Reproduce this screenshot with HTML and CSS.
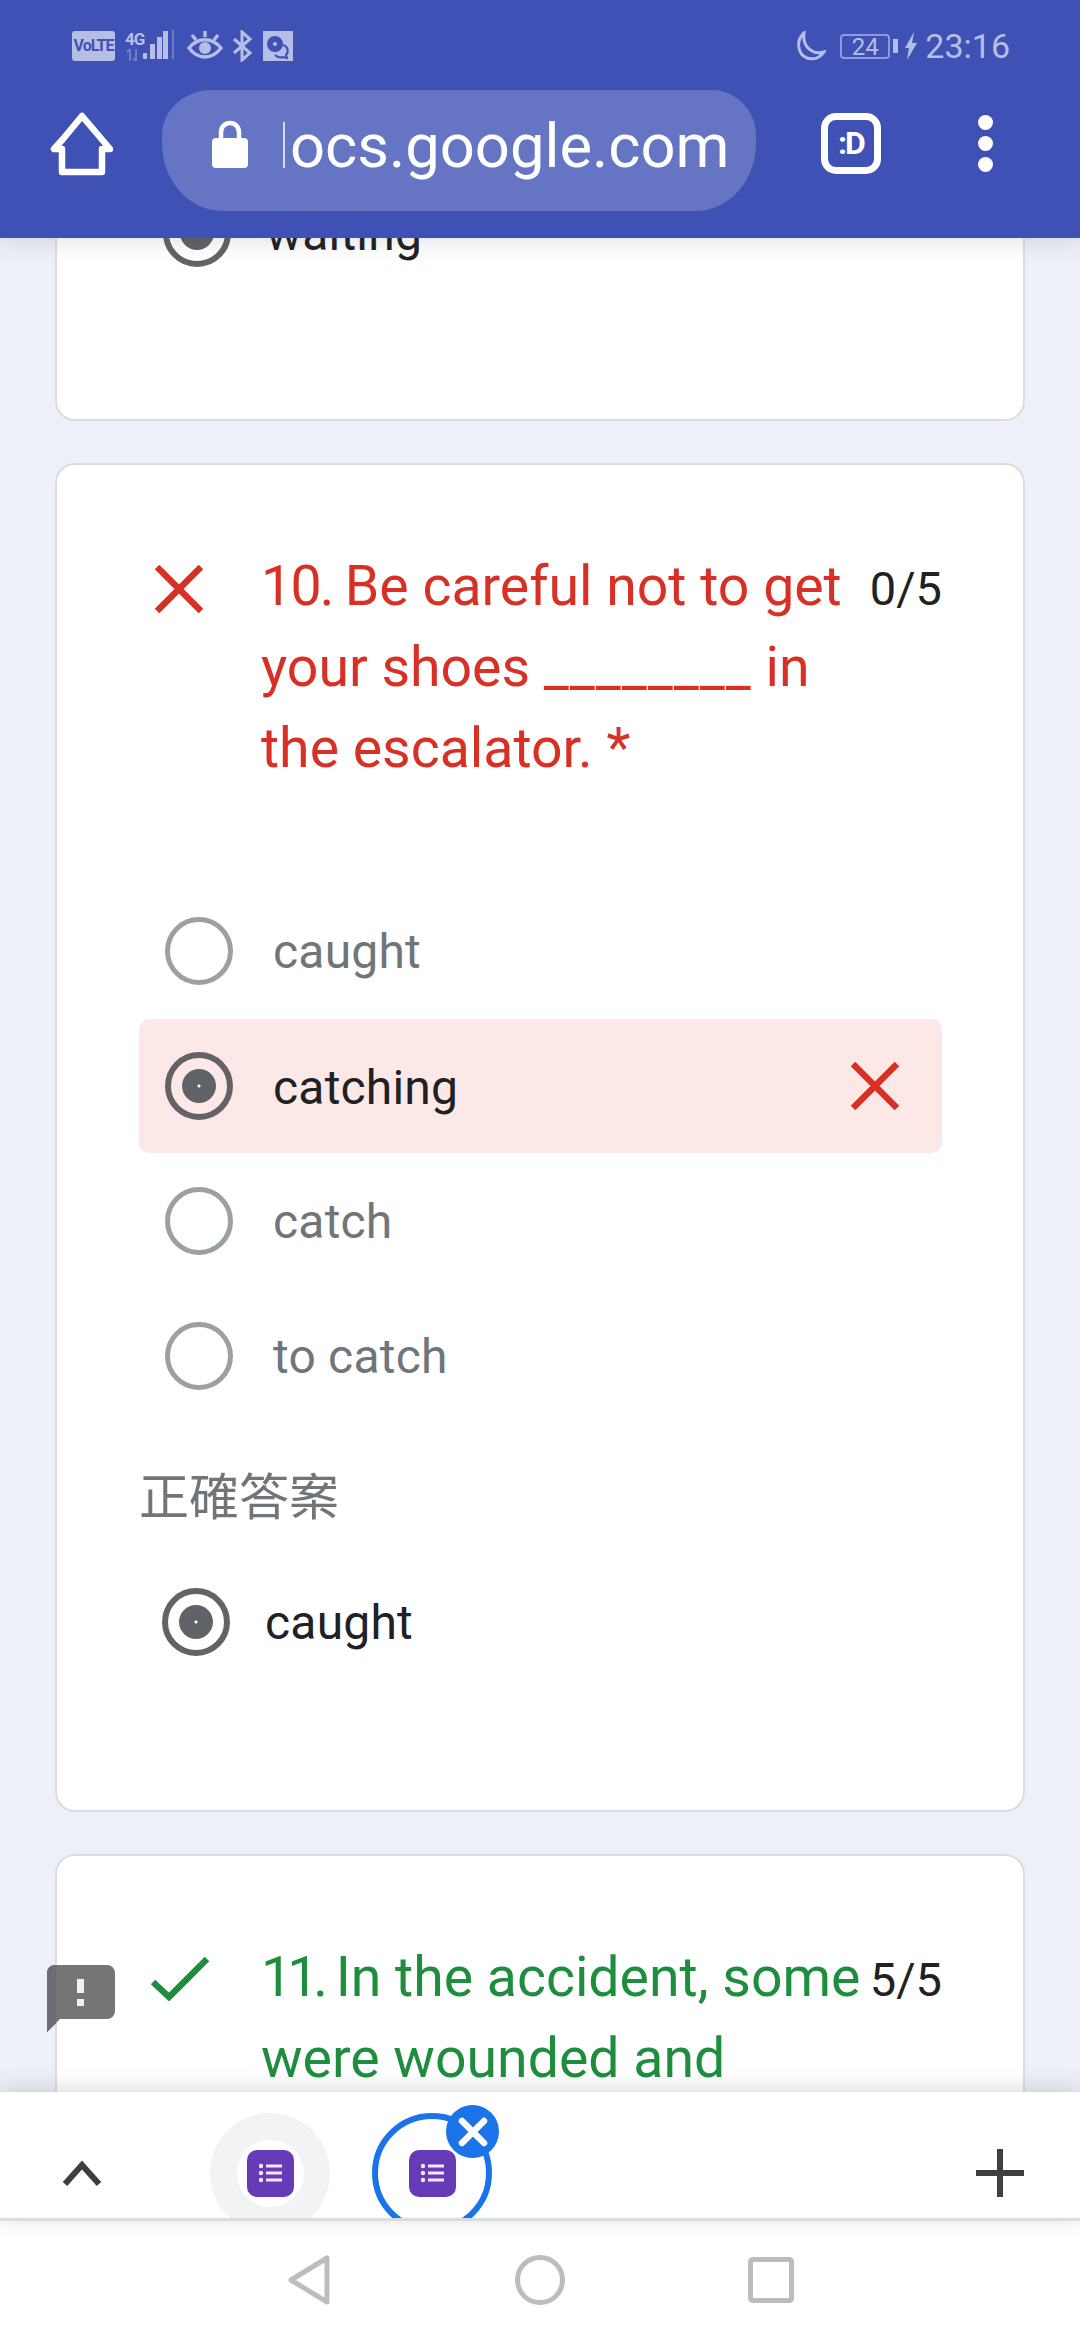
FILE: index.html
```html
<!DOCTYPE html>
<html lang="zh-Hant">
<head>
  <meta charset="utf-8">
  <title>docs.google.com</title>
  <link rel="stylesheet" href="styles.css">
</head>
<body>
  <div class="phone">
    <header class="top">
      <div class="status">
        <div class="status-left">
          <span class="volte">VoLTE</span>
          <span class="net">
            <span class="net-4g">4G</span>
            <svg class="net-arrows" width="18" height="14" viewBox="0 0 18 14"><path d="M5 13V1M2 4l3-3M11 1v12M8 10l3 3" fill="none" stroke="#6f7dc9" stroke-width="2"/></svg>
          </span>
          <svg class="bars" width="32" height="32" viewBox="0 0 32 32"><g fill="#b6bee6"><rect x="0" y="23" width="4" height="6" rx="1"/><rect x="7" y="14" width="5" height="15"/><rect x="14" y="7" width="5" height="22"/><rect x="20" y="1" width="5" height="28"/></g><rect x="29" y="0" width="2" height="29" fill="#6f7dc9"/></svg>
          <svg class="eye" width="36" height="32" viewBox="0 0 36 32"><g fill="none" stroke="#b6bee6" stroke-width="3.4"><path d="M2 18c9-11 23-11 32 0-9 12-23 12-32 0z"/><path d="M5 5l4 5M18 1v6M31 5l-4 5"/></g><circle cx="18" cy="18" r="6" fill="#b6bee6"/></svg>
          <svg class="bt" width="20" height="32" viewBox="0 0 20 32"><path d="M2 9l16 14-8 7V2l8 7L2 23" fill="none" stroke="#b6bee6" stroke-width="3"/></svg>
          <svg class="msg" width="30" height="30" viewBox="0 0 30 30"><rect width="30" height="30" fill="#b6bee6"/><g fill="none" stroke="#3f51b5" stroke-width="2"><circle cx="12" cy="13" r="7" fill="#3f51b5"/><path d="M20 14c5 1 6 7 3 10l1 3-4-1c-3 1-6 0-8-2"/></g><circle cx="12" cy="13" r="2" fill="#b6bee6"/></svg>
        </div>
        <div class="status-right">
          <svg width="33" height="30" viewBox="0 0 33 30"><path d="M11 2C3 9 4 23 14 27c7 2 13 0 17-6-9 3-22-3-20-19z" fill="none" stroke="#b6bee6" stroke-width="3"/></svg>
          <span class="battery">24</span>
          <span class="battery-nub"></span>
          <svg class="bolt" width="12" height="28" viewBox="0 0 12 28"><path d="M9 0L0 16h4l-2 12 10-17H7z" fill="#b6bee6"/></svg>
          <span class="clock">23:16</span>
        </div>
      </div>
      <div class="toolbar">
        <svg class="home" width="64" height="64" viewBox="0 0 64 64"><path d="M32 4L13 27 4 37h8v23h40V37h8z" fill="none" stroke="#fff" stroke-width="6.5" stroke-linejoin="round"/></svg>
        <div class="urlbar">
          <svg class="lock" width="38" height="48" viewBox="0 0 38 48"><path d="M10 20v-8a9 9 0 0 1 18 0v8" fill="none" stroke="#fff" stroke-width="4.5"/><rect x="1" y="18" width="36" height="30" rx="4" fill="#fff"/></svg>
          <span class="caret"></span>
          <span class="url">ocs.google.com</span>
        </div>
        <div class="tab-count">:D</div>
        <div class="dots"><i></i><i></i><i></i></div>
      </div>
    </header>

    <main class="scroller">
      <section class="card card-prev">
        <div class="answer">
          <span class="radio radio-on"></span>
          <span class="answer-text">waiting</span>
        </div>
      </section>

      <section class="card">
        <div class="question wrong">
          <svg class="mark" width="48" height="48" viewBox="0 0 48 48"><path d="M2 2l44 44M46 2L2 46" stroke="#d93025" stroke-width="6.5"/></svg>
          <div class="question-text"><span class="num-10">10. </span>Be careful not to get your shoes <span class="blank">________</span> in the escalator. *</div>
          <div class="score">0/5</div>
        </div>
        <ul class="options">
          <li class="option"><span class="radio"></span><span class="option-text">caught</span></li>
          <li class="option option-wrong">
            <span class="radio radio-on"></span><span class="option-text">catching</span>
            <svg class="option-mark" width="48" height="48" viewBox="0 0 48 48"><path d="M2 2l44 44M46 2L2 46" stroke="#d93025" stroke-width="6.5"/></svg>
          </li>
          <li class="option"><span class="radio"></span><span class="option-text">catch</span></li>
          <li class="option"><span class="radio"></span><span class="option-text">to catch</span></li>
        </ul>
        <div class="correct-label">正確答案</div>
        <div class="answer correct-answer">
          <span class="radio radio-on"></span>
          <span class="answer-text">caught</span>
        </div>
      </section>

      <section class="card">
        <div class="question right">
          <svg class="mark mark-check" width="60" height="46" viewBox="0 0 60 46"><path d="M3 27l16 15L57 4" fill="none" stroke="#1e8e3e" stroke-width="6.5"/></svg>
          <div class="question-text"><span class="num-11">11</span><span class="num-dot">. </span>In the accident, some were wounded and</div>
          <div class="score">5/5</div>
        </div>
      </section>

      <svg class="feedback" width="68" height="68" viewBox="0 0 68 68"><path d="M0 8a8 8 0 0 1 8-8h52a8 8 0 0 1 8 8v38a8 8 0 0 1-8 8H13L0 67z" fill="#757575"/><path d="M0 8a8 8 0 0 1 8-8h1v58l-9 9z" fill="#6c6c74"/><path d="M30 14h7v14h-7zM30 34h7v7h-7z" fill="#f1f1f1"/></svg>
    </main>

    <div class="tabstrip">
      <svg class="chevron" width="40" height="26" viewBox="0 0 40 26"><path d="M3 24L20 5l17 19" fill="none" stroke="#3c4043" stroke-width="6"/></svg>
      <div class="tab tab-idle">
        <span class="tab-hole">
          <svg class="forms-icon" width="47" height="47" viewBox="0 0 47 47"><rect width="47" height="47" rx="10" fill="#673ab7"/><g fill="#f3e8fd"><circle cx="14" cy="16" r="2.2"/><circle cx="14" cy="23" r="2.2"/><circle cx="14" cy="30" r="2.2"/><rect x="19" y="14.5" width="16" height="3"/><rect x="19" y="21.5" width="16" height="3"/><rect x="19" y="28.5" width="16" height="3"/></g></svg>
        </span>
      </div>
      <div class="tab tab-active">
        <svg class="forms-icon" width="47" height="47" viewBox="0 0 47 47"><rect width="47" height="47" rx="10" fill="#673ab7"/><g fill="#f3e8fd"><circle cx="14" cy="16" r="2.2"/><circle cx="14" cy="23" r="2.2"/><circle cx="14" cy="30" r="2.2"/><rect x="19" y="14.5" width="16" height="3"/><rect x="19" y="21.5" width="16" height="3"/><rect x="19" y="28.5" width="16" height="3"/></g></svg>
        <span class="tab-close">
          <svg width="30" height="30" viewBox="0 0 30 30"><path d="M4 4l22 22M26 4L4 26" stroke="#fff" stroke-width="6.5" stroke-linecap="round"/></svg>
        </span>
      </div>
      <svg class="plus" width="48" height="48" viewBox="0 0 48 48"><path d="M24 0v48M0 24h48" stroke="#3c4043" stroke-width="6"/></svg>
    </div>

    <nav class="navbar">
      <svg width="44" height="50" viewBox="0 0 44 50"><path d="M40 3v44L4 25z" fill="none" stroke="#bdbdbd" stroke-width="5" stroke-linejoin="round"/></svg>
      <svg width="50" height="50" viewBox="0 0 50 50"><circle cx="25" cy="25" r="22.5" fill="none" stroke="#bdbdbd" stroke-width="5"/></svg>
      <svg width="46" height="46" viewBox="0 0 46 46"><rect x="2.5" y="2.5" width="41" height="41" rx="2" fill="none" stroke="#bdbdbd" stroke-width="5"/></svg>
    </nav>
  </div>
</body>
</html>
```

FILE: styles.css
```css
html, body {
    margin: 0;
    padding: 0;
}
body {
    font-family: Roboto, "Noto Sans CJK TC", sans-serif;
    background: #edf0f8;
}
.phone {
    width: 1080px;
    height: 2340px;
    display: flex;
    flex-direction: column;
    overflow: hidden;
    position: relative;
}

/* top bar */
.top {
    height: 238px;
    flex: none;
    background: #3f51b5;
    box-shadow: 0 2px 22px rgba(60, 64, 67, .18);
    position: relative;
    z-index: 5;
}
.status {
    height: 90px;
    box-sizing: border-box;
    padding: 30px 70px 0 72px;
    display: flex;
    justify-content: space-between;
    align-items: flex-start;
    color: #b6bee6;
}
.status-left, .status-right {
    display: flex;
    align-items: center;
    height: 32px;
}
.status-left svg {
    flex: none;
}
.eye {
    margin-left: 12px;
}
.bt {
    margin-left: 9px;
}
.msg {
    margin-left: 11px;
}
.volte {
    width: 43px;
    height: 30px;
    line-height: 30px;
    background: #b6bee6;
    color: #3f51b5;
    border-radius: 3px;
    font-size: 16px;
    font-weight: 700;
    text-align: center;
    letter-spacing: -1px;
    overflow: hidden;
}
.net {
    width: 18px;
    margin-left: 10px;
    display: flex;
    flex-direction: column;
    font-size: 17px;
    font-weight: 700;
    line-height: 17px;
    letter-spacing: -1px;
    white-space: nowrap;
}
.battery {
    width: 50px;
    height: 25px;
    box-sizing: border-box;
    border: 2px solid #8d99d8;
    border-radius: 4px;
    margin-left: 14px;
    font-size: 24px;
    line-height: 22px;
    text-align: center;
}
.battery-nub {
    width: 5px;
    height: 14px;
    margin-left: 3px;
    background: #b6bee6;
}
.bolt {
    margin: 0 8px 0 7px;
}
.clock {
    font-size: 34px;
    line-height: 32px;
}
.toolbar {
    height: 121px;
    display: flex;
    align-items: center;
}
.home {
    margin-left: 50px;
    margin-top: -14px;
}
.urlbar {
    width: 594px;
    height: 121px;
    margin-left: 48px;
    box-sizing: border-box;
    padding: 0 0 0 49px;
    background: #6575c4;
    border-radius: 50px 45px 60px 60px / 45px 45px 68px 68px;
    display: flex;
    align-items: center;
}
.lock {
    margin-top: -14px;
}
.caret {
    width: 2px;
    height: 46px;
    margin-left: 34px;
    margin-top: -12px;
    background: #d5daf0;
}
.url {
    margin-left: 5px;
    font-size: 61.5px;
    line-height: 70px;
    margin-top: -9px;
    color: #fff;
}
.tab-count {
    width: 60px;
    height: 61px;
    margin-left: 65px;
    margin-top: -14px;
    box-sizing: border-box;
    border: 7px solid #fff;
    border-radius: 15px;
    color: #fff;
    font-size: 32px;
    font-weight: 700;
    letter-spacing: -2px;
    line-height: 47px;
    text-align: center;
}
.dots {
    margin-left: 97px;
    margin-top: -14px;
    display: flex;
    flex-direction: column;
    gap: 6px;
}
.dots i {
    display: block;
    width: 15px;
    height: 15px;
    border-radius: 50%;
    background: #fff;
}

/* form cards */
.scroller {
    flex: 1;
    min-height: 0;
    padding: 0 55px;
    overflow: hidden;
}
.card {
    background: #fff;
    border: 2px solid #dadce0;
    border-radius: 20px;
    margin-bottom: 42px;
    padding: 80px 81px 0 82px;
    width: 970px;
    box-sizing: border-box;
}
.card-prev {
    margin-top: -100px;
    padding: 59px 0 152px 106px;
}
.card:last-of-type {
    margin-bottom: 0;
    height: 400px;
}
.question {
    display: flex;
    align-items: flex-start;
}
.wrong .question-text {
    color: #d93025;
}
.right .question-text {
    color: #1e8e3e;
}
.mark {
    flex: none;
    margin: 20px 58px 0 16px;
}
.mark-check {
    margin: 19px 51px 0 11px;
}
.question-text {
    width: 606px;
    flex: none;
    padding-top: 1px;
    font-size: 55.4px;
    line-height: 81px;
}
.num-10 {
    letter-spacing: -1.7px;
}
.num-11 {
    letter-spacing: -5px;
}
.num-dot {
    letter-spacing: -3px;
}
.blank {
    letter-spacing: 1px;
}
.score {
    flex: none;
    margin-left: auto;
    font-size: 47px;
    line-height: 87px;
    color: #202124;
}
.options {
    list-style: none;
    margin: 94px 0 0;
    padding: 0;
}
.option {
    height: 135px;
    display: flex;
    align-items: center;
    gap: 40px;
    padding-left: 26px;
    border-radius: 10px;
    font-size: 48px;
    letter-spacing: .2px;
    color: #70757a;
}
.option-text {
    padding-top: 2px;
}
.option-wrong {
    height: 134px;
    margin-top: 1px;
    background: #fde8e8;
    color: #202124;
}
.option-mark {
    margin-left: auto;
    margin-right: 43px;
}
.radio {
    flex: none;
    width: 68px;
    height: 68px;
    box-sizing: border-box;
    border: 5px solid #9aa0a6;
    border-radius: 50%;
    display: flex;
    align-items: center;
    justify-content: center;
}
.radio-on {
    border: 6px solid #636367;
}
.radio-on::after {
    content: "";
    width: 34px;
    height: 34px;
    border-radius: 50%;
    background: radial-gradient(circle, #fff 1px, #5f6368 2px);
}
.correct-label {
    margin-top: 42px;
    font-size: 50px;
    line-height: 66px;
    color: #70757a;
}
.answer {
    display: flex;
    align-items: center;
    gap: 35px;
}
.correct-answer {
    margin: 57px 0 154px 23px;
}
.answer-text {
    padding-top: 2px;
    font-size: 48px;
    line-height: 66px;
    letter-spacing: .2px;
    color: #202124;
}

/* floating feedback tag */
.feedback {
    position: absolute;
    left: 47px;
    top: 1965px;
    z-index: 3;
}

/* tab strip */
.tabstrip {
    height: 126px;
    flex: none;
    background: #fff;
    box-shadow: 0 -3px 20px rgba(60, 64, 67, .2);
    border-bottom: 3px solid #dadce0;
    display: flex;
    align-items: center;
    overflow: hidden;
    position: relative;
    z-index: 4;
}
.chevron {
    margin-left: 62px;
    margin-top: 36px;
    flex: none;
}
.tab {
    width: 120px;
    height: 120px;
    flex: none;
    box-sizing: border-box;
    border-radius: 50%;
    display: flex;
    align-items: center;
    justify-content: center;
    margin-top: 36px;
    position: relative;
}
.tab-idle {
    background: #f1f3f4;
    margin-left: 108px;
}
.tab-hole {
    width: 67px;
    height: 67px;
    background: #fff;
    border-radius: 50%;
    display: flex;
    align-items: center;
    justify-content: center;
}
.tab-active {
    margin-left: 42px;
    border: 6px solid #1a73e8;
}
.tab-close {
    position: absolute;
    top: -14px;
    left: 68px;
    width: 53px;
    height: 53px;
    border-radius: 50%;
    background: #1a73e8;
    display: flex;
    align-items: center;
    justify-content: center;
}
.plus {
    margin-left: auto;
    margin-right: 56px;
    margin-top: 36px;
    flex: none;
}

/* android nav */
.navbar {
    height: 119px;
    flex: none;
    background: #fff;
    display: flex;
    align-items: flex-start;
    padding-top: 34px;
    box-sizing: border-box;
}
.navbar svg:nth-child(1) {
    margin-left: 287px;
}
.navbar svg:nth-child(2) {
    margin-left: 184px;
}
.navbar svg:nth-child(3) {
    margin-left: 183px;
    margin-top: 2px;
}
```
